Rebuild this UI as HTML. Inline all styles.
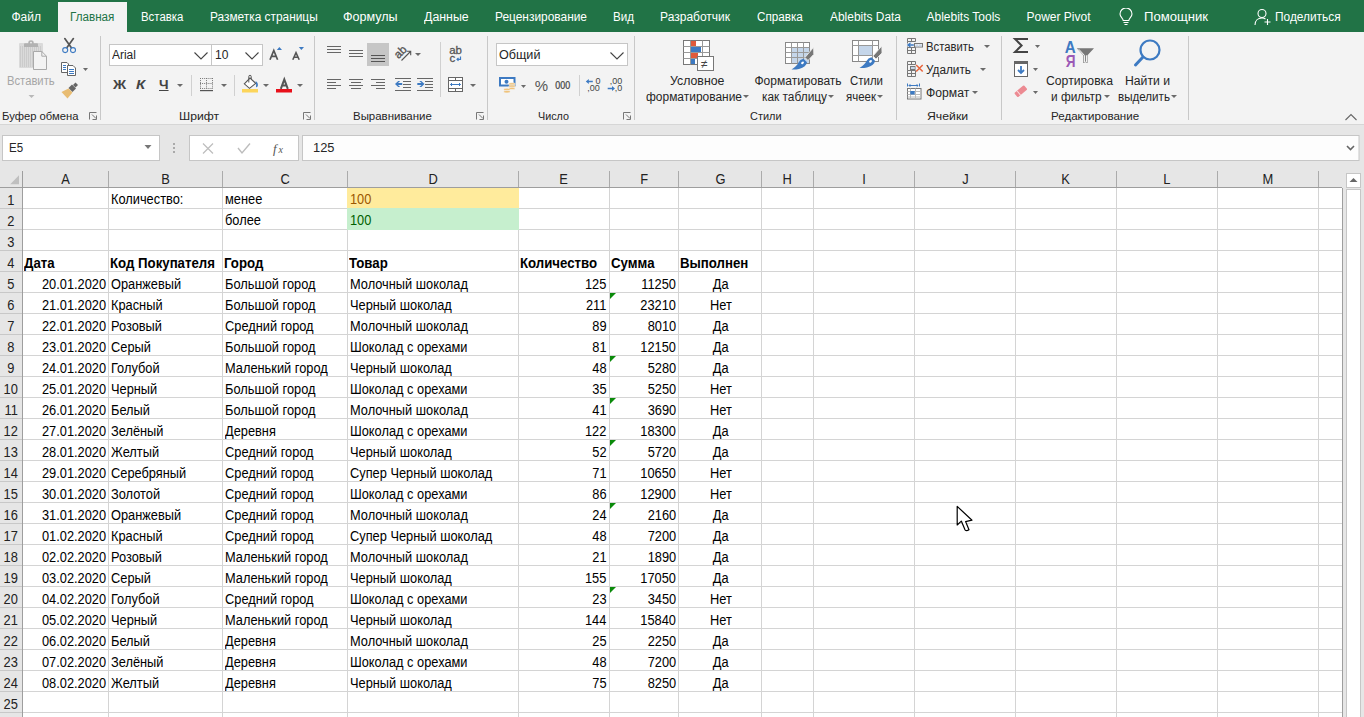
<!DOCTYPE html>
<html><head><meta charset="utf-8">
<style>
*{margin:0;padding:0;box-sizing:border-box}
html,body{width:1364px;height:717px;overflow:hidden;background:#fff}
body{position:relative;font-family:"Liberation Sans",sans-serif;color:#262626}
.a{position:absolute}
.t{position:absolute;line-height:1;white-space:nowrap}
#tabs{position:absolute;left:0;top:0;width:1364px;height:32px;background:#217346}
.tab{position:absolute;top:11px;font-size:12px;line-height:1;color:#fff;white-space:nowrap}
#ribbon{position:absolute;left:0;top:32px;width:1364px;height:92px;background:#f3f3f3;border-bottom:1px solid #d4d4d4}
.sep{position:absolute;top:36px;width:1px;height:84px;background:#c8c8c8}
.gl{position:absolute;top:110px;font-size:11.5px;line-height:1;color:#444;white-space:nowrap}
.rt{position:absolute;font-size:11.5px;line-height:1;color:#262626;white-space:nowrap}
.dd{position:absolute;width:0;height:0;border-left:3px solid transparent;border-right:3px solid transparent;border-top:3px solid #666}
.launch{position:absolute;top:112px;width:8px;height:8px}
#fbar{position:absolute;left:0;top:125px;width:1364px;height:46px;background:#e6e6e6}
.box{position:absolute;background:#fff;border:1px solid #c6c6c6}
#colhdr{position:absolute;left:0;top:171px;width:1342px;height:17px;background:#e6e6e6;border-bottom:1px solid #9e9e9e}
.ch{position:absolute;top:171px;height:16px;font-size:13px;line-height:1;text-align:center;color:#222}
.chs{position:absolute;top:171px;width:1px;height:16px;background:#b4b4b4}
.rh{position:absolute;left:0;width:22px;height:21px;background:#e6e6e6;font-size:13px;text-align:center;color:#222}
.vl{position:absolute;top:188px;width:1px;height:529px;background:#d4d4d4}
.hl{position:absolute;left:22px;width:1320px;height:1px;background:#d4d4d4}
.c{position:absolute;font-size:13px;line-height:24px;height:20px;white-space:nowrap;color:#000;letter-spacing:-0.25px;overflow:visible}
.r{text-align:right}
.m{text-align:center}
.b{font-weight:bold;letter-spacing:-0.2px}
.tri{position:absolute;width:0;height:0;border-top:6px solid #008000;border-right:6px solid transparent}
</style></head><body>
<div id="tabs">
<div class="a" style="left:58px;top:2px;width:69px;height:30px;background:#f3f3f3"></div>
<svg class="a" style="left:1117px;top:8px" width="18" height="18" viewBox="0 0 18 18" fill="none" stroke="#fff" stroke-width="1.1">
<path d="M6.2,12.5 C6.2,10.5 3,9 3,6 A6,6 0 0 1 15,6 C15,9 11.8,10.5 11.8,12.5 Z"/>
<path d="M6.5,14.5 H11.5 M7.5,16.5 H10.5"/>
</svg>
<svg class="a" style="left:1254px;top:8px" width="18" height="18" viewBox="0 0 18 18" fill="none" stroke="#fff" stroke-width="1.1">
<circle cx="8" cy="5.5" r="4"/>
<path d="M1,17 C1,12.5 4,10 8,10 C9.5,10 10.5,10.3 11.5,11"/>
<path d="M13.5,11 V17 M10.5,14 H16.5"/>
</svg>
</div>
<div class="a" style="left:0;top:32px;width:1364px;height:92px;background:#f3f3f3"></div>
<div class="a" style="left:0;top:124px;width:1364px;height:1px;background:#d6d6d6"></div>
<div class="a" style="left:0;top:125px;width:1364px;height:46px;background:#e6e6e6"></div>
<svg class="a" style="left:0;top:0" width="1364" height="171" viewBox="0 0 1364 171">
<!-- group separators -->
<g fill="#c8c8c8">
<rect x="100" y="36" width="1" height="84"/>
<rect x="314" y="36" width="1" height="84"/>
<rect x="487" y="36" width="1" height="84"/>
<rect x="634" y="36" width="1" height="84"/>
<rect x="896" y="36" width="1" height="84"/>
<rect x="1001" y="36" width="1" height="84"/>
<rect x="1188" y="36" width="1" height="84"/>
<!-- inner separators -->
<rect x="191" y="75" width="1" height="21" fill="#d0d0d0"/>
<rect x="234" y="75" width="1" height="21" fill="#d0d0d0"/>
<rect x="440" y="42" width="1" height="55" fill="#d0d0d0"/>
<rect x="579" y="75" width="1" height="21" fill="#d0d0d0"/>
</g>
<!-- dialog launchers -->
<g fill="none" stroke="#777" stroke-width="1">
<path d="M89.5,119.5 V112.5 H96.5 M92,114.5 L96,118.5 M96.5,115.5 V119.5 H92.5"/>
<path d="M303.5,119.5 V112.5 H310.5 M306,114.5 L310,118.5 M310.5,115.5 V119.5 H306.5"/>
<path d="M476.5,119.5 V112.5 H483.5 M479,114.5 L483,118.5 M483.5,115.5 V119.5 H479.5"/>
<path d="M623.5,119.5 V112.5 H630.5 M626,114.5 L630,118.5 M630.5,115.5 V119.5 H626.5"/>
</g>
<!-- dropdown arrows -->
<g fill="#6a6a6a">
<path d="M83,68 h5 l-2.5,3 z"/>
<path d="M177,84 h6 l-3,3 z"/>
<path d="M221,84 h6 l-3,3 z"/>
<path d="M263,84 h6 l-3,3 z"/>
<path d="M297,84 h6 l-3,3 z"/>
<path d="M415,53 h6 l-3,3 z"/>
<path d="M470,84 h6 l-3,3 z"/>
<path d="M521,85 h5 l-2.5,3 z"/>
<path d="M743,95 h6 l-3,3 z"/>
<path d="M828,95 h6 l-3,3 z"/>
<path d="M877,95 h6 l-3,3 z"/>
<path d="M984,45 h6 l-3,3 z"/>
<path d="M980,68 h6 l-3,3 z"/>
<path d="M972,91 h6 l-3,3 z"/>
<path d="M1035,45 h5 l-2.5,3 z"/>
<path d="M1033,68 h5 l-2.5,3 z"/>
<path d="M1033,91 h5 l-2.5,3 z"/>
<path d="M1104,95 h6 l-3,3 z"/>
<path d="M1171,95 h6 l-3,3 z"/>
</g>
<path d="M28.5,95 h6 l-3,3 z" fill="#b8b8b8"/>

<!-- ===== Clipboard ===== -->
<rect x="19" y="43" width="24" height="25" rx="1" fill="#dadada"/>
<g fill="#cbcbcb"><rect x="20" y="46" width="1" height="21"/><rect x="22" y="46" width="1" height="21"/><rect x="24" y="46" width="1" height="21"/><rect x="26" y="46" width="1" height="21"/><rect x="28" y="46" width="1" height="21"/><rect x="30" y="46" width="1" height="21"/><rect x="32" y="46" width="1" height="21"/><rect x="34" y="46" width="1" height="21"/><rect x="36" y="46" width="1" height="21"/><rect x="38" y="46" width="1" height="21"/><rect x="40" y="46" width="1" height="21"/></g>
<path d="M24,47 V44 Q24,43.3 25,43.3 H28.3 V42 Q28.3,40.3 31,40.3 Q33.7,40.3 33.7,42 V43.3 H37 Q38,43.3 38,44 V47 Z" fill="#b2b2b2"/>
<circle cx="31" cy="42.6" r="0.9" fill="#f3f3f3"/>
<path d="M33.5,51.5 H41.8 L46.5,56.2 V69.5 H33.5 Z" fill="#f3f3f3" stroke="#a9a9a9"/>
<path d="M41.8,51.5 V56.2 H46.5" fill="none" stroke="#a9a9a9"/>
<!-- scissors -->
<path d="M64.8,38.6 L71.2,47.6 M73.4,38.6 L67,47.6" stroke="#555" stroke-width="1.7" stroke-linecap="round" fill="none"/>
<g stroke="#3d7ac2" stroke-width="1.1" fill="none"><circle cx="65.2" cy="50.1" r="2.5"/><circle cx="73" cy="50.1" r="2.5"/></g>
<!-- copy -->
<path d="M61.5,62.5 H67 L68.5,64 V72.5 H61.5 Z" fill="#fff" stroke="#666"/>
<path d="M67.5,65.5 H73 L75.5,68 V75.5 H67.5 Z" fill="#fff" stroke="#666"/>
<g fill="#3d7ac2"><rect x="63" y="65" width="3" height="1"/><rect x="63" y="67" width="3" height="1"/><rect x="63" y="69" width="3" height="1"/><rect x="69" y="69" width="5" height="1"/><rect x="69" y="71" width="5" height="1"/><rect x="69" y="73" width="5" height="1"/></g>
<!-- format painter -->
<path d="M61.5,92 L68.5,88.5 L72.5,92.5 L67.5,98.5 Z" fill="#e8bc72"/>
<path d="M68.5,88 L72,84.5 L76,88.5 L72.5,92 Z" fill="#666"/>
<path d="M73,85 L75.5,82.5 L78,85 L75.5,87.5 Z" fill="#666"/>

<!-- ===== Font ===== -->
<rect x="109.5" y="44.5" width="102" height="21" fill="#fff" stroke="#c6c6c6"/>
<rect x="211.5" y="44.5" width="51" height="21" fill="#fff" stroke="#c6c6c6"/>
<path d="M194.5,52.5 L201,59 L207.5,52.5" fill="none" stroke="#444" stroke-width="1.1"/>
<path d="M245.5,52.5 L252,59 L258.5,52.5" fill="none" stroke="#444" stroke-width="1.1"/>
<!-- grow/shrink -->
<path d="M270,59.8 L273.8,50.4 L277.6,59.8 M271.5,56.3 h4.6" fill="none" stroke="#555" stroke-width="1.7"/>
<path d="M276.8,50 l2.6,-3 l2.6,3 z" fill="#3d7ac2"/>
<path d="M292.8,59.8 L296,52.6 L299.2,59.8 M294,57.3 h4" fill="none" stroke="#555" stroke-width="1.6"/>
<path d="M298.8,47 l2.6,3 l2.6,-3 z" fill="#3d7ac2"/>
<!-- borders -->
<g fill="#9a9a9a">
<path d="M200,77 h13 v1 h-13 z M200,77 v13 h1 v-13 z M212,77 v13 h1 v-13z" fill="none"/>
</g>
<g stroke="#777" stroke-width="1" stroke-dasharray="1,1.1" fill="none">
<path d="M200.5,78 V89 M206.5,78 V89 M212.5,78 V89 M200,78.5 H213 M200,83.5 H213 M200,88.5 H213"/>
</g>
<rect x="200" y="90" width="13" height="1.2" fill="#555"/>
<!-- fill color -->
<path d="M244.3,83.8 L250,78 L255.7,83.3 L249.5,88.4 Z" fill="#fff" stroke="#555" stroke-width="1.1"/>
<path d="M248.8,82.5 V76.5 q0,-1.2 1.2,-1.2 q1.2,0 1.2,1.2 V79" fill="none" stroke="#555" stroke-width="1"/>
<path d="M255.6,81 q2.8,1.5 2.2,5 q-0.6,1.2 -1.8,1.2 q0.6,-2.5 -0.4,-6.2z" fill="#3d7ac2"/>
<rect x="242" y="89" width="16" height="3.5" fill="#fcd55b"/>
<!-- font color -->
<path d="M280.8,88.8 L284.3,79.3 L287.8,88.8 M282,85.5 h4.6" fill="none" stroke="#555" stroke-width="2"/>
<rect x="276" y="89" width="16" height="3.5" fill="#e8101a"/>

<!-- ===== Alignment ===== -->
<g fill="#666">
<rect x="327" y="46" width="14" height="1"/><rect x="327" y="49" width="14" height="1"/><rect x="327" y="52" width="14" height="1"/>
<rect x="349" y="50" width="14" height="1"/><rect x="349" y="53" width="14" height="1"/><rect x="349" y="56" width="14" height="1"/>
</g>
<rect x="367" y="43" width="22" height="23" fill="#c6c6c6"/>
<g fill="#555"><rect x="371" y="55" width="14" height="1"/><rect x="371" y="58" width="14" height="1"/><rect x="371" y="61" width="14" height="1"/></g>
<!-- orientation -->
<g stroke="#555" stroke-width="1.1" fill="none">
<path d="M401.5,60.5 L410.5,51.5 M406.8,51.3 H410.7 V55.2"/>
</g>
<text x="400.3" y="55.8" font-size="11.5" fill="#555" stroke="#555" stroke-width="0.35" text-anchor="middle" font-family="Liberation Sans" transform="rotate(-45 400.3 51.8)">ab</text>
<!-- left/center/right -->
<g fill="#666">
<rect x="327" y="79" width="14" height="1"/><rect x="327" y="82" width="9" height="1"/><rect x="327" y="85" width="14" height="1"/><rect x="327" y="88" width="9" height="1"/>
<rect x="349" y="79" width="14" height="1"/><rect x="351" y="82" width="10" height="1"/><rect x="349" y="85" width="14" height="1"/><rect x="351" y="88" width="10" height="1"/>
<rect x="371" y="79" width="14" height="1"/><rect x="376" y="82" width="9" height="1"/><rect x="371" y="85" width="14" height="1"/><rect x="376" y="88" width="9" height="1"/>
<!-- indents -->
<rect x="395" y="78" width="16" height="1"/><rect x="403" y="81" width="8" height="1"/><rect x="403" y="84" width="8" height="1"/><rect x="403" y="87" width="8" height="1"/><rect x="395" y="90" width="16" height="1"/>
<rect x="417" y="78" width="16" height="1"/><rect x="425" y="81" width="8" height="1"/><rect x="425" y="84" width="8" height="1"/><rect x="425" y="87" width="8" height="1"/><rect x="417" y="90" width="16" height="1"/>
</g>
<path d="M395,84 l3.2,-3 h2 l-2.2,2 h4.2 v2 h-4.2 l2.2,2 h-2 z" fill="#3d7ac2"/>
<path d="M424.5,84 l-3.2,-3 h-2 l2.2,2 h-4.2 v2 h4.2 l-2.2,2 h2 z" fill="#3d7ac2"/>
<!-- wrap -->
<text x="449.2" y="53.8" font-size="11.5" fill="#555" stroke="#555" stroke-width="0.3" font-family="Liberation Sans">ab</text>
<text x="449.6" y="61.6" font-size="11.5" fill="#555" stroke="#555" stroke-width="0.3" font-family="Liberation Sans">c</text>
<path d="M460.5,56.4 v2.9 h-3.3 M458.5,57.8 l-1.5,1.5 l1.5,1.5" fill="none" stroke="#3d7ac2" stroke-width="1.2"/>
<!-- merge -->
<rect x="448.5" y="77.5" width="14" height="14" fill="#fff" stroke="#666"/>
<path d="M448.5,80.5 h14 M448.5,88.5 h14 M455.5,77.5 v3 M455.5,88.5 v3" stroke="#666" fill="none"/>
<path d="M450.5,84.5 h10 M452,83 l-1.5,1.5 l1.5,1.5 M459,83 l1.5,1.5 l-1.5,1.5" stroke="#3d7ac2" fill="none"/>

<!-- ===== Number ===== -->
<rect x="496.5" y="43.5" width="131" height="22" fill="#fff" stroke="#c6c6c6"/>
<path d="M610.5,52.5 L617,59 L623.5,52.5" fill="none" stroke="#444" stroke-width="1.1"/>
<!-- currency -->
<rect x="500" y="78" width="14.5" height="7.5" fill="#fff" stroke="#3d7ac2" stroke-width="2"/>
<circle cx="506.5" cy="81.8" r="2" fill="#3d7ac2"/>
<g fill="#efc27a" stroke="#f3f3f3" stroke-width="0.6"><ellipse cx="512" cy="84" rx="3.3" ry="1.3"/><ellipse cx="512" cy="86.2" rx="3.3" ry="1.3"/><ellipse cx="507" cy="89.5" rx="3.3" ry="1.3"/><ellipse cx="507" cy="91.7" rx="3.3" ry="1.3"/><ellipse cx="512" cy="88.4" rx="3" ry="1.2"/></g>
<!-- percent / thousands -->
<text x="534.8" y="91" font-size="15" fill="#555" font-family="Liberation Sans">%</text>
<text x="555.3" y="88.6" font-size="10.5" fill="#444" stroke="#444" stroke-width="0.25" font-family="Liberation Sans" transform="translate(555.3 0) scale(0.85 1) translate(-555.3 0)">000</text>
<!-- decimals -->
<text x="595.5" y="83.6" font-size="9" fill="#444" font-family="Liberation Sans">0</text>
<text x="587.3" y="91.4" font-size="9" fill="#444" font-family="Liberation Sans">,00</text>
<path d="M585.8,81.5 l3,-2.5 v1.7 h4 v1.6 h-4 v1.7 z" fill="#3d7ac2"/>
<text x="609.8" y="83.6" font-size="9" fill="#444" font-family="Liberation Sans">,00</text>
<text x="614.8" y="91.4" font-size="9" fill="#444" font-family="Liberation Sans">,0</text>
<path d="M615,88.5 l-3,-2.5 v1.7 h-4.3 v1.6 h4.3 v1.7 z" fill="#3d7ac2"/>
</svg>
<svg class="a" style="left:0;top:0" width="1364" height="171" viewBox="0 0 1364 171">
<!-- ===== Styles ===== -->
<!-- conditional formatting -->
<rect x="683.5" y="40.5" width="26" height="24" fill="#fff" stroke="#777"/>
<path d="M683.5,46.5 h26 M683.5,52.5 h26 M683.5,58.5 h26 M690.5,40.5 v24 M702.5,40.5 v24" stroke="#999" fill="none"/>
<rect x="691" y="41" width="5" height="5" fill="#e05a3a"/>
<rect x="691" y="47" width="10" height="5" fill="#3d7ac2"/>
<rect x="691" y="53" width="7" height="5" fill="#e05a3a"/>
<rect x="691" y="59" width="4" height="5" fill="#3d7ac2"/>
<rect x="697.5" y="56.5" width="16" height="14" fill="#fff" stroke="#777"/>
<text x="701" y="68" font-size="12" fill="#444" font-family="Liberation Sans">≠</text>
<!-- format as table -->
<rect x="785.5" y="42.5" width="24" height="21" fill="#fff" stroke="#888"/>
<rect x="791" y="48" width="18" height="15" fill="#c5d6ea"/>
<path d="M785.5,47.5 h24 M785.5,52.5 h24 M785.5,57.5 h24 M791.5,42.5 v21 M797.5,42.5 v21 M803.5,42.5 v21" stroke="#999" fill="none"/>
<path d="M813.6,47.3 L813.8,54.3 L808,60.5 L805,57.5 Z" fill="#777" stroke="#f3f3f3" stroke-width="0.8"/>
<path d="M803.5,58.8 L807,62.3 Q806.5,67 799,69 Q795,69.8 791.5,69.5 Q797,66 798.5,62.5 Q800,59.5 803.5,58.8 Z" fill="#3d7ac2"/>
<ellipse cx="802.5" cy="62.8" rx="1.6" ry="1.1" fill="#fff" transform="rotate(-40 802.5 62.8)"/>
<!-- cell styles -->
<rect x="852.5" y="40.5" width="26" height="21" fill="#fff" stroke="#888"/>
<rect x="859" y="45.5" width="14" height="10" fill="#c5d6ea"/>
<path d="M852.5,45.5 h26 M852.5,55.5 h26 M858.5,40.5 v21 M872.5,40.5 v21" stroke="#999" fill="none"/>
<path d="M881.8,46 L882,53 L876,59 L873,56 Z" fill="#777" stroke="#f3f3f3" stroke-width="0.8"/>
<path d="M871.5,57.3 L875,60.8 Q874.5,65.5 867,67.5 Q863,68.3 859.5,68 Q865,64.5 866.5,61 Q868,58 871.5,57.3 Z" fill="#3d7ac2"/>
<ellipse cx="870.5" cy="61.3" rx="1.6" ry="1.1" fill="#fff" transform="rotate(-40 870.5 61.3)"/>

<!-- ===== Cells ===== -->
<!-- insert -->
<g fill="none" stroke="#777">
<path d="M907.5,38.5 h8 v3 h-8 z M911.5,38.5 v3"/>
<path d="M907.5,47.5 h8 v6 h-8 z M907.5,50.5 h8 M911.5,47.5 v6"/>
<path d="M907.5,41.5 v2 M907.5,46.5 v1"/>
<rect x="914.5" y="43.5" width="8" height="3.5"/>
</g>
<rect x="915.5" y="44.5" width="2.8" height="2" fill="#c5d6ea"/><rect x="919" y="44.5" width="2.8" height="2" fill="#c5d6ea"/>
<path d="M906.8,45 l3,-2.3 h1.6 l-1.6,1.5 h4 v1.6 h-4 l1.6,1.5 h-1.6 z" fill="#3d7ac2"/>
<!-- delete -->
<g fill="none" stroke="#777">
<path d="M907.5,61.5 h8 v3 h-8 z M911.5,61.5 v3"/>
<path d="M907.5,70.5 h8 v6 h-8 z M907.5,73.5 h8 M911.5,70.5 v6"/>
<path d="M907.5,64.5 v6"/>
<rect x="910.5" y="66.5" width="4.5" height="3"/>
</g>
<rect x="911" y="67" width="3.5" height="2" fill="#c5d6ea"/>
<path d="M916.2,65 l6.5,6.5 M922.7,65 l-6.5,6.5" stroke="#e8643c" stroke-width="1.5"/>
<!-- format -->
<path d="M907.5,83.5 v3 M919.5,83.5 v3" stroke="#3d7ac2" fill="none"/>
<path d="M909,85.5 h9 M910.3,84.2 l-1.3,1.3 l1.3,1.3 M916.7,84.2 l1.3,1.3 l-1.3,1.3" stroke="#3d7ac2" fill="none"/>
<rect x="907.5" y="88.5" width="13.5" height="10.5" fill="#fff" stroke="#777"/>
<path d="M907.5,91.5 h13.5 M907.5,94.5 h13.5 M907.5,97 h13.5 M910.5,88.5 v10.5 M915.5,88.5 v10.5" stroke="#bbb" fill="none"/>
<rect x="910.3" y="91" width="4.4" height="3.5" fill="#3d7ac2"/>

<!-- ===== Editing ===== -->
<path d="M1028,39 H1015 L1021.6,45.5 L1015,52 H1028" fill="none" stroke="#444" stroke-width="2" stroke-linejoin="miter"/>
<rect x="1014.5" y="61.5" width="13" height="15" fill="#fff" stroke="#666"/>
<rect x="1014" y="61" width="14" height="3" fill="#666"/>
<path d="M1021,66 v7 M1018,70 l3,3 l3,-3" stroke="#3d7ac2" stroke-width="1.8" fill="none"/>
<g transform="rotate(-40 1020.7 91.2)"><rect x="1014.5" y="88.5" width="12.5" height="5.6" rx="1" fill="#ec8a92"/><rect x="1017.6" y="88.5" width="0.9" height="5.6" fill="#fbe0e3"/></g>
<!-- sort -->
<text x="1064.8" y="52.6" font-size="16" font-weight="bold" fill="#3d7ac2" font-family="Liberation Sans" transform="translate(1064.8 0) scale(0.95 1) translate(-1064.8 0)">A</text>
<text x="1065.8" y="66.7" font-size="16" font-weight="bold" fill="#9b59b6" font-family="Liberation Sans" transform="translate(1065.8 0) scale(0.85 1) translate(-1065.8 0)">Я</text>
<path d="M1076.8,48.3 h17.2 l-6.5,7 v7.7 h-4.2 v-7.7 z" fill="#777"/>
<path d="M1078.8,49.3 l5.6,6 v6.9 h2 v-6.9" fill="none" stroke="#fff" stroke-width="1"/>
<!-- find -->
<circle cx="1150" cy="50" r="9.5" fill="none" stroke="#3d7ac2" stroke-width="2.2"/>
<path d="M1143,57 L1135.5,65" stroke="#3d7ac2" stroke-width="3" stroke-linecap="round"/>
<!-- collapse -->
<path d="M1345.5,120 L1351,114.5 L1356.5,120" fill="none" stroke="#666" stroke-width="1.1"/>

<!-- ===== Formula bar ===== -->
<rect x="2.5" y="135.5" width="157" height="25" fill="#fff" stroke="#c6c6c6"/>
<path d="M144.5,145 h7 l-3.5,4 z" fill="#777"/>
<g fill="#aaa"><rect x="173" y="143" width="2" height="2"/><rect x="173" y="147" width="2" height="2"/><rect x="173" y="151" width="2" height="2"/></g>
<rect x="189.5" y="135.5" width="109" height="25" fill="#fff" stroke="#c6c6c6"/>
<path d="M203,143.5 l10,10 M213,143.5 l-10,10" stroke="#bdbdbd" stroke-width="1.2"/>
<path d="M238,148 l4,5 l8,-9.5" stroke="#bdbdbd" stroke-width="1.4" fill="none"/>
<text x="273" y="153" font-size="13" font-style="italic" fill="#555" font-family="Liberation Serif">f</text>
<text x="278.5" y="153" font-size="10" font-style="italic" fill="#555" font-family="Liberation Serif">x</text>
<rect x="302.5" y="135.5" width="1056.5" height="25" fill="#fdfdfd" stroke="#c6c6c6"/>
<path d="M1347,146 l3.5,3.5 l3.5,-3.5" fill="none" stroke="#666" stroke-width="1.6"/>
</svg>
<div class="a" style="left:0;top:171px;width:1342px;height:17px;background:#e6e6e6"></div>
<div class="a" style="left:0;top:187px;width:22px;height:530px;background:#e6e6e6"></div>
<div class="a" style="left:0;top:208px;width:22px;height:1px;background:#c8c8c8"></div>
<div class="a" style="left:23px;top:208px;width:325px;height:1px;background:#d4d4d4"></div>
<div class="a" style="left:518px;top:208px;width:824px;height:1px;background:#d4d4d4"></div>
<div class="a" style="left:0;top:229px;width:22px;height:1px;background:#c8c8c8"></div>
<div class="a" style="left:23px;top:229px;width:325px;height:1px;background:#d4d4d4"></div>
<div class="a" style="left:518px;top:229px;width:824px;height:1px;background:#d4d4d4"></div>
<div class="a" style="left:0;top:250px;width:22px;height:1px;background:#c8c8c8"></div>
<div class="a" style="left:23px;top:250px;width:1319px;height:1px;background:#d4d4d4"></div>
<div class="a" style="left:0;top:271px;width:22px;height:1px;background:#c8c8c8"></div>
<div class="a" style="left:23px;top:271px;width:1319px;height:1px;background:#d4d4d4"></div>
<div class="a" style="left:0;top:292px;width:22px;height:1px;background:#c8c8c8"></div>
<div class="a" style="left:23px;top:292px;width:1319px;height:1px;background:#d4d4d4"></div>
<div class="a" style="left:0;top:313px;width:22px;height:1px;background:#c8c8c8"></div>
<div class="a" style="left:23px;top:313px;width:1319px;height:1px;background:#d4d4d4"></div>
<div class="a" style="left:0;top:334px;width:22px;height:1px;background:#c8c8c8"></div>
<div class="a" style="left:23px;top:334px;width:1319px;height:1px;background:#d4d4d4"></div>
<div class="a" style="left:0;top:355px;width:22px;height:1px;background:#c8c8c8"></div>
<div class="a" style="left:23px;top:355px;width:1319px;height:1px;background:#d4d4d4"></div>
<div class="a" style="left:0;top:376px;width:22px;height:1px;background:#c8c8c8"></div>
<div class="a" style="left:23px;top:376px;width:1319px;height:1px;background:#d4d4d4"></div>
<div class="a" style="left:0;top:397px;width:22px;height:1px;background:#c8c8c8"></div>
<div class="a" style="left:23px;top:397px;width:1319px;height:1px;background:#d4d4d4"></div>
<div class="a" style="left:0;top:418px;width:22px;height:1px;background:#c8c8c8"></div>
<div class="a" style="left:23px;top:418px;width:1319px;height:1px;background:#d4d4d4"></div>
<div class="a" style="left:0;top:439px;width:22px;height:1px;background:#c8c8c8"></div>
<div class="a" style="left:23px;top:439px;width:1319px;height:1px;background:#d4d4d4"></div>
<div class="a" style="left:0;top:460px;width:22px;height:1px;background:#c8c8c8"></div>
<div class="a" style="left:23px;top:460px;width:1319px;height:1px;background:#d4d4d4"></div>
<div class="a" style="left:0;top:481px;width:22px;height:1px;background:#c8c8c8"></div>
<div class="a" style="left:23px;top:481px;width:1319px;height:1px;background:#d4d4d4"></div>
<div class="a" style="left:0;top:502px;width:22px;height:1px;background:#c8c8c8"></div>
<div class="a" style="left:23px;top:502px;width:1319px;height:1px;background:#d4d4d4"></div>
<div class="a" style="left:0;top:523px;width:22px;height:1px;background:#c8c8c8"></div>
<div class="a" style="left:23px;top:523px;width:1319px;height:1px;background:#d4d4d4"></div>
<div class="a" style="left:0;top:544px;width:22px;height:1px;background:#c8c8c8"></div>
<div class="a" style="left:23px;top:544px;width:1319px;height:1px;background:#d4d4d4"></div>
<div class="a" style="left:0;top:565px;width:22px;height:1px;background:#c8c8c8"></div>
<div class="a" style="left:23px;top:565px;width:1319px;height:1px;background:#d4d4d4"></div>
<div class="a" style="left:0;top:586px;width:22px;height:1px;background:#c8c8c8"></div>
<div class="a" style="left:23px;top:586px;width:1319px;height:1px;background:#d4d4d4"></div>
<div class="a" style="left:0;top:607px;width:22px;height:1px;background:#c8c8c8"></div>
<div class="a" style="left:23px;top:607px;width:1319px;height:1px;background:#d4d4d4"></div>
<div class="a" style="left:0;top:628px;width:22px;height:1px;background:#c8c8c8"></div>
<div class="a" style="left:23px;top:628px;width:1319px;height:1px;background:#d4d4d4"></div>
<div class="a" style="left:0;top:649px;width:22px;height:1px;background:#c8c8c8"></div>
<div class="a" style="left:23px;top:649px;width:1319px;height:1px;background:#d4d4d4"></div>
<div class="a" style="left:0;top:670px;width:22px;height:1px;background:#c8c8c8"></div>
<div class="a" style="left:23px;top:670px;width:1319px;height:1px;background:#d4d4d4"></div>
<div class="a" style="left:0;top:691px;width:22px;height:1px;background:#c8c8c8"></div>
<div class="a" style="left:23px;top:691px;width:1319px;height:1px;background:#d4d4d4"></div>
<div class="a" style="left:0;top:712px;width:22px;height:1px;background:#c8c8c8"></div>
<div class="a" style="left:23px;top:712px;width:1319px;height:1px;background:#d4d4d4"></div>
<div class="a" style="left:108px;top:171px;width:1px;height:16px;background:#ababab"></div>
<div class="a" style="left:108px;top:188px;width:1px;height:529px;background:#d4d4d4"></div>
<div class="a" style="left:222px;top:171px;width:1px;height:16px;background:#ababab"></div>
<div class="a" style="left:222px;top:188px;width:1px;height:529px;background:#d4d4d4"></div>
<div class="a" style="left:347px;top:171px;width:1px;height:16px;background:#ababab"></div>
<div class="a" style="left:347px;top:230px;width:1px;height:487px;background:#d4d4d4"></div>
<div class="a" style="left:347px;top:188px;width:1px;height:42px;background:#d4d4d4"></div>
<div class="a" style="left:518px;top:171px;width:1px;height:16px;background:#ababab"></div>
<div class="a" style="left:518px;top:230px;width:1px;height:487px;background:#d4d4d4"></div>
<div class="a" style="left:518px;top:188px;width:1px;height:42px;background:#d4d4d4"></div>
<div class="a" style="left:609px;top:171px;width:1px;height:16px;background:#ababab"></div>
<div class="a" style="left:609px;top:188px;width:1px;height:529px;background:#d4d4d4"></div>
<div class="a" style="left:678px;top:171px;width:1px;height:16px;background:#ababab"></div>
<div class="a" style="left:678px;top:188px;width:1px;height:529px;background:#d4d4d4"></div>
<div class="a" style="left:761px;top:171px;width:1px;height:16px;background:#ababab"></div>
<div class="a" style="left:761px;top:188px;width:1px;height:529px;background:#d4d4d4"></div>
<div class="a" style="left:813px;top:171px;width:1px;height:16px;background:#ababab"></div>
<div class="a" style="left:813px;top:188px;width:1px;height:529px;background:#d4d4d4"></div>
<div class="a" style="left:914px;top:171px;width:1px;height:16px;background:#ababab"></div>
<div class="a" style="left:914px;top:188px;width:1px;height:529px;background:#d4d4d4"></div>
<div class="a" style="left:1015px;top:171px;width:1px;height:16px;background:#ababab"></div>
<div class="a" style="left:1015px;top:188px;width:1px;height:529px;background:#d4d4d4"></div>
<div class="a" style="left:1116px;top:171px;width:1px;height:16px;background:#ababab"></div>
<div class="a" style="left:1116px;top:188px;width:1px;height:529px;background:#d4d4d4"></div>
<div class="a" style="left:1217px;top:171px;width:1px;height:16px;background:#ababab"></div>
<div class="a" style="left:1217px;top:188px;width:1px;height:529px;background:#d4d4d4"></div>
<div class="a" style="left:1318px;top:171px;width:1px;height:16px;background:#ababab"></div>
<div class="a" style="left:1318px;top:188px;width:1px;height:529px;background:#d4d4d4"></div>
<div class="a" style="left:347px;top:188px;width:172px;height:20px;background:#ffeb9c"></div>
<div class="a" style="left:347px;top:208px;width:172px;height:22px;background:#c6efce"></div>
<div class="a" style="left:0;top:187px;width:1342px;height:1px;background:#9e9e9e"></div>
<div class="a" style="left:22px;top:171px;width:1px;height:546px;background:#9e9e9e"></div>
<svg class="a" style="left:10px;top:175px" width="10" height="10"><path d="M0.2,9.2 L9,9.2 L9,0.3 Z" fill="#bfbfbf"/></svg>
<svg class="a" style="left:610px;top:293px" width="7" height="7"><path d="M0,0 H6 L0,6 Z" fill="#0a8a0a"/></svg>
<svg class="a" style="left:610px;top:356px" width="7" height="7"><path d="M0,0 H6 L0,6 Z" fill="#0a8a0a"/></svg>
<svg class="a" style="left:610px;top:398px" width="7" height="7"><path d="M0,0 H6 L0,6 Z" fill="#0a8a0a"/></svg>
<svg class="a" style="left:610px;top:440px" width="7" height="7"><path d="M0,0 H6 L0,6 Z" fill="#0a8a0a"/></svg>
<svg class="a" style="left:610px;top:503px" width="7" height="7"><path d="M0,0 H6 L0,6 Z" fill="#0a8a0a"/></svg>
<svg class="a" style="left:610px;top:587px" width="7" height="7"><path d="M0,0 H6 L0,6 Z" fill="#0a8a0a"/></svg>
<div class="a" style="left:1342px;top:171px;width:22px;height:546px;background:#e6e6e6"></div>
<div class="a" style="left:1342px;top:188px;width:1px;height:529px;background:#9e9e9e"></div>
<div class="a" style="left:1346px;top:173px;width:15px;height:15px;background:#fff;border:1px solid #c6c6c6"></div>
<svg class="a" style="left:1349px;top:177px" width="9" height="6"><path d="M0.5,5 L4.5,1 L8.5,5 Z" fill="#666"/></svg>
<div class="a" style="left:1346px;top:189px;width:15px;height:540px;background:#fff;border:1px solid #c6c6c6"></div><div class="t" style="left:11.50px;top:10.84px;font-size:12px;color:#fff;font-weight:normal;">Файл</div>
<div class="t" style="left:140.93px;top:10.84px;font-size:12px;color:#fff;font-weight:normal;transform:scaleX(0.9493);transform-origin:left 0;">Вставка</div>
<div class="t" style="left:209.51px;top:10.84px;font-size:12px;color:#fff;font-weight:normal;transform:scaleX(0.9891);transform-origin:left 0;">Разметка страницы</div>
<div class="t" style="left:343.18px;top:10.84px;font-size:12px;color:#fff;font-weight:normal;transform:scaleX(1.0465);transform-origin:left 0;">Формулы</div>
<div class="t" style="left:424.18px;top:10.84px;font-size:12px;color:#fff;font-weight:normal;transform:scaleX(1.0316);transform-origin:left 0;">Данные</div>
<div class="t" style="left:494.80px;top:10.84px;font-size:12px;color:#fff;font-weight:normal;transform:scaleX(0.9927);transform-origin:left 0;">Рецензирование</div>
<div class="t" style="left:612.52px;top:10.84px;font-size:12px;color:#fff;font-weight:normal;transform:scaleX(0.9653);transform-origin:left 0;">Вид</div>
<div class="t" style="left:660.10px;top:10.84px;font-size:12px;color:#fff;font-weight:normal;">Разработчик</div>
<div class="t" style="left:756.91px;top:10.84px;font-size:12px;color:#fff;font-weight:normal;transform:scaleX(0.9744);transform-origin:left 0;">Справка</div>
<div class="t" style="left:829.50px;top:10.84px;font-size:12px;color:#fff;font-weight:normal;transform:scaleX(0.9947);transform-origin:left 0;">Ablebits Data</div>
<div class="t" style="left:926.50px;top:10.84px;font-size:12px;color:#fff;font-weight:normal;">Ablebits Tools</div>
<div class="t" style="left:1026.50px;top:10.84px;font-size:12px;color:#fff;font-weight:normal;">Power Pivot</div>
<div class="t" style="left:1144.45px;top:10.84px;font-size:12px;color:#fff;font-weight:normal;transform:scaleX(1.0921);transform-origin:left 0;">Помощник</div>
<div class="t" style="left:1274.51px;top:10.84px;font-size:12px;color:#fff;font-weight:normal;transform:scaleX(0.9898);transform-origin:left 0;">Поделиться</div>
<div class="t" style="left:70.11px;top:10.84px;font-size:12px;color:#217346;font-weight:normal;transform:scaleX(0.9712);transform-origin:left 0;">Главная</div>
<div class="t" style="left:60.83px;top:172.15px;font-size:14px;color:#222;font-weight:normal;transform:scaleX(0.9200);transform-origin:center 0;">A</div>
<div class="t" style="left:160.83px;top:172.15px;font-size:14px;color:#222;font-weight:normal;transform:scaleX(0.9200);transform-origin:center 0;">B</div>
<div class="t" style="left:279.94px;top:172.15px;font-size:14px;color:#222;font-weight:normal;transform:scaleX(0.9200);transform-origin:center 0;">C</div>
<div class="t" style="left:427.94px;top:172.15px;font-size:14px;color:#222;font-weight:normal;transform:scaleX(0.9200);transform-origin:center 0;">D</div>
<div class="t" style="left:559.33px;top:172.15px;font-size:14px;color:#222;font-weight:normal;transform:scaleX(0.9200);transform-origin:center 0;">E</div>
<div class="t" style="left:639.72px;top:172.15px;font-size:14px;color:#222;font-weight:normal;transform:scaleX(0.9200);transform-origin:center 0;">F</div>
<div class="t" style="left:714.55px;top:172.15px;font-size:14px;color:#222;font-weight:normal;transform:scaleX(0.9200);transform-origin:center 0;">G</div>
<div class="t" style="left:782.44px;top:172.15px;font-size:14px;color:#222;font-weight:normal;transform:scaleX(0.9200);transform-origin:center 0;">H</div>
<div class="t" style="left:862.05px;top:172.15px;font-size:14px;color:#222;font-weight:normal;transform:scaleX(0.9200);transform-origin:center 0;">I</div>
<div class="t" style="left:961.50px;top:172.15px;font-size:14px;color:#222;font-weight:normal;transform:scaleX(0.9200);transform-origin:center 0;">J</div>
<div class="t" style="left:1061.33px;top:172.15px;font-size:14px;color:#222;font-weight:normal;transform:scaleX(0.9200);transform-origin:center 0;">K</div>
<div class="t" style="left:1163.10px;top:172.15px;font-size:14px;color:#222;font-weight:normal;transform:scaleX(0.9200);transform-origin:center 0;">L</div>
<div class="t" style="left:1262.16px;top:172.15px;font-size:14px;color:#222;font-weight:normal;transform:scaleX(0.9200);transform-origin:center 0;">M</div>
<div class="t" style="left:7.10px;top:193.15px;font-size:14px;color:#222;font-weight:normal;transform:scaleX(0.9200);transform-origin:center 0;">1</div>
<div class="t" style="left:7.10px;top:214.15px;font-size:14px;color:#222;font-weight:normal;transform:scaleX(0.9200);transform-origin:center 0;">2</div>
<div class="t" style="left:7.10px;top:235.15px;font-size:14px;color:#222;font-weight:normal;transform:scaleX(0.9200);transform-origin:center 0;">3</div>
<div class="t" style="left:7.10px;top:256.15px;font-size:14px;color:#222;font-weight:normal;transform:scaleX(0.9200);transform-origin:center 0;">4</div>
<div class="t" style="left:7.10px;top:277.15px;font-size:14px;color:#222;font-weight:normal;transform:scaleX(0.9200);transform-origin:center 0;">5</div>
<div class="t" style="left:7.10px;top:298.15px;font-size:14px;color:#222;font-weight:normal;transform:scaleX(0.9200);transform-origin:center 0;">6</div>
<div class="t" style="left:7.10px;top:319.15px;font-size:14px;color:#222;font-weight:normal;transform:scaleX(0.9200);transform-origin:center 0;">7</div>
<div class="t" style="left:7.10px;top:340.15px;font-size:14px;color:#222;font-weight:normal;transform:scaleX(0.9200);transform-origin:center 0;">8</div>
<div class="t" style="left:7.10px;top:361.15px;font-size:14px;color:#222;font-weight:normal;transform:scaleX(0.9200);transform-origin:center 0;">9</div>
<div class="t" style="left:3.21px;top:382.15px;font-size:14px;color:#222;font-weight:normal;transform:scaleX(0.9200);transform-origin:center 0;">10</div>
<div class="t" style="left:3.73px;top:403.15px;font-size:14px;color:#222;font-weight:normal;transform:scaleX(0.9200);transform-origin:center 0;">11</div>
<div class="t" style="left:3.21px;top:424.15px;font-size:14px;color:#222;font-weight:normal;transform:scaleX(0.9200);transform-origin:center 0;">12</div>
<div class="t" style="left:3.21px;top:445.15px;font-size:14px;color:#222;font-weight:normal;transform:scaleX(0.9200);transform-origin:center 0;">13</div>
<div class="t" style="left:3.21px;top:466.15px;font-size:14px;color:#222;font-weight:normal;transform:scaleX(0.9200);transform-origin:center 0;">14</div>
<div class="t" style="left:3.21px;top:487.15px;font-size:14px;color:#222;font-weight:normal;transform:scaleX(0.9200);transform-origin:center 0;">15</div>
<div class="t" style="left:3.21px;top:508.15px;font-size:14px;color:#222;font-weight:normal;transform:scaleX(0.9200);transform-origin:center 0;">16</div>
<div class="t" style="left:3.21px;top:529.15px;font-size:14px;color:#222;font-weight:normal;transform:scaleX(0.9200);transform-origin:center 0;">17</div>
<div class="t" style="left:3.21px;top:550.15px;font-size:14px;color:#222;font-weight:normal;transform:scaleX(0.9200);transform-origin:center 0;">18</div>
<div class="t" style="left:3.21px;top:571.15px;font-size:14px;color:#222;font-weight:normal;transform:scaleX(0.9200);transform-origin:center 0;">19</div>
<div class="t" style="left:3.21px;top:592.15px;font-size:14px;color:#222;font-weight:normal;transform:scaleX(0.9200);transform-origin:center 0;">20</div>
<div class="t" style="left:3.21px;top:613.15px;font-size:14px;color:#222;font-weight:normal;transform:scaleX(0.9200);transform-origin:center 0;">21</div>
<div class="t" style="left:3.21px;top:634.15px;font-size:14px;color:#222;font-weight:normal;transform:scaleX(0.9200);transform-origin:center 0;">22</div>
<div class="t" style="left:3.21px;top:655.15px;font-size:14px;color:#222;font-weight:normal;transform:scaleX(0.9200);transform-origin:center 0;">23</div>
<div class="t" style="left:3.21px;top:676.15px;font-size:14px;color:#222;font-weight:normal;transform:scaleX(0.9200);transform-origin:center 0;">24</div>
<div class="t" style="left:3.21px;top:697.15px;font-size:14px;color:#222;font-weight:normal;transform:scaleX(0.9200);transform-origin:center 0;">25</div>
<div class="t" style="left:3.21px;top:718.15px;font-size:14px;color:#222;font-weight:normal;transform:scaleX(0.9200);transform-origin:center 0;">26</div>
<div class="t" style="left:110.50px;top:192.15px;font-size:14px;color:#000;font-weight:normal;transform:scaleX(0.9150);transform-origin:left 0;">Количество:</div>
<div class="t" style="left:224.50px;top:192.15px;font-size:14px;color:#000;font-weight:normal;transform:scaleX(0.9150);transform-origin:left 0;">менее</div>
<div class="t" style="left:349.50px;top:192.15px;font-size:14px;color:#9c5700;font-weight:normal;transform:scaleX(0.9150);transform-origin:left 0;">100</div>
<div class="t" style="left:224.50px;top:213.15px;font-size:14px;color:#000;font-weight:normal;transform:scaleX(0.9150);transform-origin:left 0;">более</div>
<div class="t" style="left:349.50px;top:213.15px;font-size:14px;color:#006100;font-weight:normal;transform:scaleX(0.9150);transform-origin:left 0;">100</div>
<div class="t" style="left:24.00px;top:256.15px;font-size:14px;color:#000;font-weight:bold;transform:scaleX(0.9450);transform-origin:left 0;">Дата</div>
<div class="t" style="left:110.00px;top:256.15px;font-size:14px;color:#000;font-weight:bold;transform:scaleX(0.9450);transform-origin:left 0;">Код Покупателя</div>
<div class="t" style="left:224.00px;top:256.15px;font-size:14px;color:#000;font-weight:bold;transform:scaleX(0.9450);transform-origin:left 0;">Город</div>
<div class="t" style="left:349.00px;top:256.15px;font-size:14px;color:#000;font-weight:bold;transform:scaleX(0.9450);transform-origin:left 0;">Товар</div>
<div class="t" style="left:520.00px;top:256.15px;font-size:14px;color:#000;font-weight:bold;transform:scaleX(0.9450);transform-origin:left 0;">Количество</div>
<div class="t" style="left:611.00px;top:256.15px;font-size:14px;color:#000;font-weight:bold;transform:scaleX(0.9450);transform-origin:left 0;">Сумма</div>
<div class="t" style="left:680.00px;top:256.15px;font-size:14px;color:#000;font-weight:bold;transform:scaleX(0.9450);transform-origin:left 0;">Выполнен</div>
<div class="t" style="left:35.72px;top:277.15px;font-size:14px;color:#000;font-weight:normal;transform:scaleX(0.9150);transform-origin:right 0;">20.01.2020</div>
<div class="t" style="left:110.50px;top:277.15px;font-size:14px;color:#000;font-weight:normal;transform:scaleX(0.9150);transform-origin:left 0;">Оранжевый</div>
<div class="t" style="left:224.50px;top:277.15px;font-size:14px;color:#000;font-weight:normal;transform:scaleX(0.9150);transform-origin:left 0;">Большой город</div>
<div class="t" style="left:349.50px;top:277.15px;font-size:14px;color:#000;font-weight:normal;transform:scaleX(0.9150);transform-origin:left 0;">Молочный шоколад</div>
<div class="t" style="left:583.44px;top:277.15px;font-size:14px;color:#000;font-weight:normal;transform:scaleX(0.9150);transform-origin:right 0;">125</div>
<div class="t" style="left:637.89px;top:277.15px;font-size:14px;color:#000;font-weight:normal;transform:scaleX(0.9150);transform-origin:right 0;">11250</div>
<div class="t" style="left:711.86px;top:277.15px;font-size:14px;color:#000;font-weight:normal;transform:scaleX(0.9150);transform-origin:center 0;">Да</div>
<div class="t" style="left:35.72px;top:298.15px;font-size:14px;color:#000;font-weight:normal;transform:scaleX(0.9150);transform-origin:right 0;">21.01.2020</div>
<div class="t" style="left:110.50px;top:298.15px;font-size:14px;color:#000;font-weight:normal;transform:scaleX(0.9150);transform-origin:left 0;">Красный</div>
<div class="t" style="left:224.50px;top:298.15px;font-size:14px;color:#000;font-weight:normal;transform:scaleX(0.9150);transform-origin:left 0;">Большой город</div>
<div class="t" style="left:349.50px;top:298.15px;font-size:14px;color:#000;font-weight:normal;transform:scaleX(0.9150);transform-origin:left 0;">Черный шоколад</div>
<div class="t" style="left:584.47px;top:298.15px;font-size:14px;color:#000;font-weight:normal;transform:scaleX(0.9150);transform-origin:right 0;">211</div>
<div class="t" style="left:636.86px;top:298.15px;font-size:14px;color:#000;font-weight:normal;transform:scaleX(0.9150);transform-origin:right 0;">23210</div>
<div class="t" style="left:708.58px;top:298.15px;font-size:14px;color:#000;font-weight:normal;transform:scaleX(0.9150);transform-origin:center 0;">Нет</div>
<div class="t" style="left:35.72px;top:319.15px;font-size:14px;color:#000;font-weight:normal;transform:scaleX(0.9150);transform-origin:right 0;">22.01.2020</div>
<div class="t" style="left:110.50px;top:319.15px;font-size:14px;color:#000;font-weight:normal;transform:scaleX(0.9150);transform-origin:left 0;">Розовый</div>
<div class="t" style="left:224.50px;top:319.15px;font-size:14px;color:#000;font-weight:normal;transform:scaleX(0.9150);transform-origin:left 0;">Средний город</div>
<div class="t" style="left:349.50px;top:319.15px;font-size:14px;color:#000;font-weight:normal;transform:scaleX(0.9150);transform-origin:left 0;">Молочный шоколад</div>
<div class="t" style="left:591.22px;top:319.15px;font-size:14px;color:#000;font-weight:normal;transform:scaleX(0.9150);transform-origin:right 0;">89</div>
<div class="t" style="left:644.64px;top:319.15px;font-size:14px;color:#000;font-weight:normal;transform:scaleX(0.9150);transform-origin:right 0;">8010</div>
<div class="t" style="left:711.86px;top:319.15px;font-size:14px;color:#000;font-weight:normal;transform:scaleX(0.9150);transform-origin:center 0;">Да</div>
<div class="t" style="left:35.72px;top:340.15px;font-size:14px;color:#000;font-weight:normal;transform:scaleX(0.9150);transform-origin:right 0;">23.01.2020</div>
<div class="t" style="left:110.50px;top:340.15px;font-size:14px;color:#000;font-weight:normal;transform:scaleX(0.9150);transform-origin:left 0;">Серый</div>
<div class="t" style="left:224.50px;top:340.15px;font-size:14px;color:#000;font-weight:normal;transform:scaleX(0.9150);transform-origin:left 0;">Большой город</div>
<div class="t" style="left:349.50px;top:340.15px;font-size:14px;color:#000;font-weight:normal;transform:scaleX(0.9150);transform-origin:left 0;">Шоколад с орехами</div>
<div class="t" style="left:591.22px;top:340.15px;font-size:14px;color:#000;font-weight:normal;transform:scaleX(0.9150);transform-origin:right 0;">81</div>
<div class="t" style="left:636.86px;top:340.15px;font-size:14px;color:#000;font-weight:normal;transform:scaleX(0.9150);transform-origin:right 0;">12150</div>
<div class="t" style="left:711.86px;top:340.15px;font-size:14px;color:#000;font-weight:normal;transform:scaleX(0.9150);transform-origin:center 0;">Да</div>
<div class="t" style="left:35.72px;top:361.15px;font-size:14px;color:#000;font-weight:normal;transform:scaleX(0.9150);transform-origin:right 0;">24.01.2020</div>
<div class="t" style="left:110.50px;top:361.15px;font-size:14px;color:#000;font-weight:normal;transform:scaleX(0.9150);transform-origin:left 0;">Голубой</div>
<div class="t" style="left:224.50px;top:361.15px;font-size:14px;color:#000;font-weight:normal;transform:scaleX(0.9150);transform-origin:left 0;">Маленький город</div>
<div class="t" style="left:349.50px;top:361.15px;font-size:14px;color:#000;font-weight:normal;transform:scaleX(0.9150);transform-origin:left 0;">Черный шоколад</div>
<div class="t" style="left:591.22px;top:361.15px;font-size:14px;color:#000;font-weight:normal;transform:scaleX(0.9150);transform-origin:right 0;">48</div>
<div class="t" style="left:644.64px;top:361.15px;font-size:14px;color:#000;font-weight:normal;transform:scaleX(0.9150);transform-origin:right 0;">5280</div>
<div class="t" style="left:711.86px;top:361.15px;font-size:14px;color:#000;font-weight:normal;transform:scaleX(0.9150);transform-origin:center 0;">Да</div>
<div class="t" style="left:35.72px;top:382.15px;font-size:14px;color:#000;font-weight:normal;transform:scaleX(0.9150);transform-origin:right 0;">25.01.2020</div>
<div class="t" style="left:110.50px;top:382.15px;font-size:14px;color:#000;font-weight:normal;transform:scaleX(0.9150);transform-origin:left 0;">Черный</div>
<div class="t" style="left:224.50px;top:382.15px;font-size:14px;color:#000;font-weight:normal;transform:scaleX(0.9150);transform-origin:left 0;">Большой город</div>
<div class="t" style="left:349.50px;top:382.15px;font-size:14px;color:#000;font-weight:normal;transform:scaleX(0.9150);transform-origin:left 0;">Шоколад с орехами</div>
<div class="t" style="left:591.22px;top:382.15px;font-size:14px;color:#000;font-weight:normal;transform:scaleX(0.9150);transform-origin:right 0;">35</div>
<div class="t" style="left:644.64px;top:382.15px;font-size:14px;color:#000;font-weight:normal;transform:scaleX(0.9150);transform-origin:right 0;">5250</div>
<div class="t" style="left:708.58px;top:382.15px;font-size:14px;color:#000;font-weight:normal;transform:scaleX(0.9150);transform-origin:center 0;">Нет</div>
<div class="t" style="left:35.72px;top:403.15px;font-size:14px;color:#000;font-weight:normal;transform:scaleX(0.9150);transform-origin:right 0;">26.01.2020</div>
<div class="t" style="left:110.50px;top:403.15px;font-size:14px;color:#000;font-weight:normal;transform:scaleX(0.9150);transform-origin:left 0;">Белый</div>
<div class="t" style="left:224.50px;top:403.15px;font-size:14px;color:#000;font-weight:normal;transform:scaleX(0.9150);transform-origin:left 0;">Большой город</div>
<div class="t" style="left:349.50px;top:403.15px;font-size:14px;color:#000;font-weight:normal;transform:scaleX(0.9150);transform-origin:left 0;">Молочный шоколад</div>
<div class="t" style="left:591.22px;top:403.15px;font-size:14px;color:#000;font-weight:normal;transform:scaleX(0.9150);transform-origin:right 0;">41</div>
<div class="t" style="left:644.64px;top:403.15px;font-size:14px;color:#000;font-weight:normal;transform:scaleX(0.9150);transform-origin:right 0;">3690</div>
<div class="t" style="left:708.58px;top:403.15px;font-size:14px;color:#000;font-weight:normal;transform:scaleX(0.9150);transform-origin:center 0;">Нет</div>
<div class="t" style="left:35.72px;top:424.15px;font-size:14px;color:#000;font-weight:normal;transform:scaleX(0.9150);transform-origin:right 0;">27.01.2020</div>
<div class="t" style="left:110.50px;top:424.15px;font-size:14px;color:#000;font-weight:normal;transform:scaleX(0.9150);transform-origin:left 0;">Зелёный</div>
<div class="t" style="left:224.50px;top:424.15px;font-size:14px;color:#000;font-weight:normal;transform:scaleX(0.9150);transform-origin:left 0;">Деревня</div>
<div class="t" style="left:349.50px;top:424.15px;font-size:14px;color:#000;font-weight:normal;transform:scaleX(0.9150);transform-origin:left 0;">Шоколад с орехами</div>
<div class="t" style="left:583.44px;top:424.15px;font-size:14px;color:#000;font-weight:normal;transform:scaleX(0.9150);transform-origin:right 0;">122</div>
<div class="t" style="left:636.86px;top:424.15px;font-size:14px;color:#000;font-weight:normal;transform:scaleX(0.9150);transform-origin:right 0;">18300</div>
<div class="t" style="left:711.86px;top:424.15px;font-size:14px;color:#000;font-weight:normal;transform:scaleX(0.9150);transform-origin:center 0;">Да</div>
<div class="t" style="left:35.72px;top:445.15px;font-size:14px;color:#000;font-weight:normal;transform:scaleX(0.9150);transform-origin:right 0;">28.01.2020</div>
<div class="t" style="left:110.50px;top:445.15px;font-size:14px;color:#000;font-weight:normal;transform:scaleX(0.9150);transform-origin:left 0;">Желтый</div>
<div class="t" style="left:224.50px;top:445.15px;font-size:14px;color:#000;font-weight:normal;transform:scaleX(0.9150);transform-origin:left 0;">Средний город</div>
<div class="t" style="left:349.50px;top:445.15px;font-size:14px;color:#000;font-weight:normal;transform:scaleX(0.9150);transform-origin:left 0;">Черный шоколад</div>
<div class="t" style="left:591.22px;top:445.15px;font-size:14px;color:#000;font-weight:normal;transform:scaleX(0.9150);transform-origin:right 0;">52</div>
<div class="t" style="left:644.64px;top:445.15px;font-size:14px;color:#000;font-weight:normal;transform:scaleX(0.9150);transform-origin:right 0;">5720</div>
<div class="t" style="left:711.86px;top:445.15px;font-size:14px;color:#000;font-weight:normal;transform:scaleX(0.9150);transform-origin:center 0;">Да</div>
<div class="t" style="left:35.72px;top:466.15px;font-size:14px;color:#000;font-weight:normal;transform:scaleX(0.9150);transform-origin:right 0;">29.01.2020</div>
<div class="t" style="left:110.50px;top:466.15px;font-size:14px;color:#000;font-weight:normal;transform:scaleX(0.9150);transform-origin:left 0;">Серебряный</div>
<div class="t" style="left:224.50px;top:466.15px;font-size:14px;color:#000;font-weight:normal;transform:scaleX(0.9150);transform-origin:left 0;">Средний город</div>
<div class="t" style="left:349.50px;top:466.15px;font-size:14px;color:#000;font-weight:normal;transform:scaleX(0.9150);transform-origin:left 0;">Супер Черный шоколад</div>
<div class="t" style="left:591.22px;top:466.15px;font-size:14px;color:#000;font-weight:normal;transform:scaleX(0.9150);transform-origin:right 0;">71</div>
<div class="t" style="left:636.86px;top:466.15px;font-size:14px;color:#000;font-weight:normal;transform:scaleX(0.9150);transform-origin:right 0;">10650</div>
<div class="t" style="left:708.58px;top:466.15px;font-size:14px;color:#000;font-weight:normal;transform:scaleX(0.9150);transform-origin:center 0;">Нет</div>
<div class="t" style="left:35.72px;top:487.15px;font-size:14px;color:#000;font-weight:normal;transform:scaleX(0.9150);transform-origin:right 0;">30.01.2020</div>
<div class="t" style="left:110.50px;top:487.15px;font-size:14px;color:#000;font-weight:normal;transform:scaleX(0.9150);transform-origin:left 0;">Золотой</div>
<div class="t" style="left:224.50px;top:487.15px;font-size:14px;color:#000;font-weight:normal;transform:scaleX(0.9150);transform-origin:left 0;">Средний город</div>
<div class="t" style="left:349.50px;top:487.15px;font-size:14px;color:#000;font-weight:normal;transform:scaleX(0.9150);transform-origin:left 0;">Шоколад с орехами</div>
<div class="t" style="left:591.22px;top:487.15px;font-size:14px;color:#000;font-weight:normal;transform:scaleX(0.9150);transform-origin:right 0;">86</div>
<div class="t" style="left:636.86px;top:487.15px;font-size:14px;color:#000;font-weight:normal;transform:scaleX(0.9150);transform-origin:right 0;">12900</div>
<div class="t" style="left:708.58px;top:487.15px;font-size:14px;color:#000;font-weight:normal;transform:scaleX(0.9150);transform-origin:center 0;">Нет</div>
<div class="t" style="left:35.72px;top:508.15px;font-size:14px;color:#000;font-weight:normal;transform:scaleX(0.9150);transform-origin:right 0;">31.01.2020</div>
<div class="t" style="left:110.50px;top:508.15px;font-size:14px;color:#000;font-weight:normal;transform:scaleX(0.9150);transform-origin:left 0;">Оранжевый</div>
<div class="t" style="left:224.50px;top:508.15px;font-size:14px;color:#000;font-weight:normal;transform:scaleX(0.9150);transform-origin:left 0;">Средний город</div>
<div class="t" style="left:349.50px;top:508.15px;font-size:14px;color:#000;font-weight:normal;transform:scaleX(0.9150);transform-origin:left 0;">Молочный шоколад</div>
<div class="t" style="left:591.22px;top:508.15px;font-size:14px;color:#000;font-weight:normal;transform:scaleX(0.9150);transform-origin:right 0;">24</div>
<div class="t" style="left:644.64px;top:508.15px;font-size:14px;color:#000;font-weight:normal;transform:scaleX(0.9150);transform-origin:right 0;">2160</div>
<div class="t" style="left:711.86px;top:508.15px;font-size:14px;color:#000;font-weight:normal;transform:scaleX(0.9150);transform-origin:center 0;">Да</div>
<div class="t" style="left:35.72px;top:529.15px;font-size:14px;color:#000;font-weight:normal;transform:scaleX(0.9150);transform-origin:right 0;">01.02.2020</div>
<div class="t" style="left:110.50px;top:529.15px;font-size:14px;color:#000;font-weight:normal;transform:scaleX(0.9150);transform-origin:left 0;">Красный</div>
<div class="t" style="left:224.50px;top:529.15px;font-size:14px;color:#000;font-weight:normal;transform:scaleX(0.9150);transform-origin:left 0;">Средний город</div>
<div class="t" style="left:349.50px;top:529.15px;font-size:14px;color:#000;font-weight:normal;transform:scaleX(0.9150);transform-origin:left 0;">Супер Черный шоколад</div>
<div class="t" style="left:591.22px;top:529.15px;font-size:14px;color:#000;font-weight:normal;transform:scaleX(0.9150);transform-origin:right 0;">48</div>
<div class="t" style="left:644.64px;top:529.15px;font-size:14px;color:#000;font-weight:normal;transform:scaleX(0.9150);transform-origin:right 0;">7200</div>
<div class="t" style="left:711.86px;top:529.15px;font-size:14px;color:#000;font-weight:normal;transform:scaleX(0.9150);transform-origin:center 0;">Да</div>
<div class="t" style="left:35.72px;top:550.15px;font-size:14px;color:#000;font-weight:normal;transform:scaleX(0.9150);transform-origin:right 0;">02.02.2020</div>
<div class="t" style="left:110.50px;top:550.15px;font-size:14px;color:#000;font-weight:normal;transform:scaleX(0.9150);transform-origin:left 0;">Розовый</div>
<div class="t" style="left:224.50px;top:550.15px;font-size:14px;color:#000;font-weight:normal;transform:scaleX(0.9150);transform-origin:left 0;">Маленький город</div>
<div class="t" style="left:349.50px;top:550.15px;font-size:14px;color:#000;font-weight:normal;transform:scaleX(0.9150);transform-origin:left 0;">Молочный шоколад</div>
<div class="t" style="left:591.22px;top:550.15px;font-size:14px;color:#000;font-weight:normal;transform:scaleX(0.9150);transform-origin:right 0;">21</div>
<div class="t" style="left:644.64px;top:550.15px;font-size:14px;color:#000;font-weight:normal;transform:scaleX(0.9150);transform-origin:right 0;">1890</div>
<div class="t" style="left:711.86px;top:550.15px;font-size:14px;color:#000;font-weight:normal;transform:scaleX(0.9150);transform-origin:center 0;">Да</div>
<div class="t" style="left:35.72px;top:571.15px;font-size:14px;color:#000;font-weight:normal;transform:scaleX(0.9150);transform-origin:right 0;">03.02.2020</div>
<div class="t" style="left:110.50px;top:571.15px;font-size:14px;color:#000;font-weight:normal;transform:scaleX(0.9150);transform-origin:left 0;">Серый</div>
<div class="t" style="left:224.50px;top:571.15px;font-size:14px;color:#000;font-weight:normal;transform:scaleX(0.9150);transform-origin:left 0;">Маленький город</div>
<div class="t" style="left:349.50px;top:571.15px;font-size:14px;color:#000;font-weight:normal;transform:scaleX(0.9150);transform-origin:left 0;">Черный шоколад</div>
<div class="t" style="left:583.44px;top:571.15px;font-size:14px;color:#000;font-weight:normal;transform:scaleX(0.9150);transform-origin:right 0;">155</div>
<div class="t" style="left:636.86px;top:571.15px;font-size:14px;color:#000;font-weight:normal;transform:scaleX(0.9150);transform-origin:right 0;">17050</div>
<div class="t" style="left:711.86px;top:571.15px;font-size:14px;color:#000;font-weight:normal;transform:scaleX(0.9150);transform-origin:center 0;">Да</div>
<div class="t" style="left:35.72px;top:592.15px;font-size:14px;color:#000;font-weight:normal;transform:scaleX(0.9150);transform-origin:right 0;">04.02.2020</div>
<div class="t" style="left:110.50px;top:592.15px;font-size:14px;color:#000;font-weight:normal;transform:scaleX(0.9150);transform-origin:left 0;">Голубой</div>
<div class="t" style="left:224.50px;top:592.15px;font-size:14px;color:#000;font-weight:normal;transform:scaleX(0.9150);transform-origin:left 0;">Средний город</div>
<div class="t" style="left:349.50px;top:592.15px;font-size:14px;color:#000;font-weight:normal;transform:scaleX(0.9150);transform-origin:left 0;">Шоколад с орехами</div>
<div class="t" style="left:591.22px;top:592.15px;font-size:14px;color:#000;font-weight:normal;transform:scaleX(0.9150);transform-origin:right 0;">23</div>
<div class="t" style="left:644.64px;top:592.15px;font-size:14px;color:#000;font-weight:normal;transform:scaleX(0.9150);transform-origin:right 0;">3450</div>
<div class="t" style="left:708.58px;top:592.15px;font-size:14px;color:#000;font-weight:normal;transform:scaleX(0.9150);transform-origin:center 0;">Нет</div>
<div class="t" style="left:35.72px;top:613.15px;font-size:14px;color:#000;font-weight:normal;transform:scaleX(0.9150);transform-origin:right 0;">05.02.2020</div>
<div class="t" style="left:110.50px;top:613.15px;font-size:14px;color:#000;font-weight:normal;transform:scaleX(0.9150);transform-origin:left 0;">Черный</div>
<div class="t" style="left:224.50px;top:613.15px;font-size:14px;color:#000;font-weight:normal;transform:scaleX(0.9150);transform-origin:left 0;">Маленький город</div>
<div class="t" style="left:349.50px;top:613.15px;font-size:14px;color:#000;font-weight:normal;transform:scaleX(0.9150);transform-origin:left 0;">Черный шоколад</div>
<div class="t" style="left:583.44px;top:613.15px;font-size:14px;color:#000;font-weight:normal;transform:scaleX(0.9150);transform-origin:right 0;">144</div>
<div class="t" style="left:636.86px;top:613.15px;font-size:14px;color:#000;font-weight:normal;transform:scaleX(0.9150);transform-origin:right 0;">15840</div>
<div class="t" style="left:708.58px;top:613.15px;font-size:14px;color:#000;font-weight:normal;transform:scaleX(0.9150);transform-origin:center 0;">Нет</div>
<div class="t" style="left:35.72px;top:634.15px;font-size:14px;color:#000;font-weight:normal;transform:scaleX(0.9150);transform-origin:right 0;">06.02.2020</div>
<div class="t" style="left:110.50px;top:634.15px;font-size:14px;color:#000;font-weight:normal;transform:scaleX(0.9150);transform-origin:left 0;">Белый</div>
<div class="t" style="left:224.50px;top:634.15px;font-size:14px;color:#000;font-weight:normal;transform:scaleX(0.9150);transform-origin:left 0;">Деревня</div>
<div class="t" style="left:349.50px;top:634.15px;font-size:14px;color:#000;font-weight:normal;transform:scaleX(0.9150);transform-origin:left 0;">Молочный шоколад</div>
<div class="t" style="left:591.22px;top:634.15px;font-size:14px;color:#000;font-weight:normal;transform:scaleX(0.9150);transform-origin:right 0;">25</div>
<div class="t" style="left:644.64px;top:634.15px;font-size:14px;color:#000;font-weight:normal;transform:scaleX(0.9150);transform-origin:right 0;">2250</div>
<div class="t" style="left:711.86px;top:634.15px;font-size:14px;color:#000;font-weight:normal;transform:scaleX(0.9150);transform-origin:center 0;">Да</div>
<div class="t" style="left:35.72px;top:655.15px;font-size:14px;color:#000;font-weight:normal;transform:scaleX(0.9150);transform-origin:right 0;">07.02.2020</div>
<div class="t" style="left:110.50px;top:655.15px;font-size:14px;color:#000;font-weight:normal;transform:scaleX(0.9150);transform-origin:left 0;">Зелёный</div>
<div class="t" style="left:224.50px;top:655.15px;font-size:14px;color:#000;font-weight:normal;transform:scaleX(0.9150);transform-origin:left 0;">Деревня</div>
<div class="t" style="left:349.50px;top:655.15px;font-size:14px;color:#000;font-weight:normal;transform:scaleX(0.9150);transform-origin:left 0;">Шоколад с орехами</div>
<div class="t" style="left:591.22px;top:655.15px;font-size:14px;color:#000;font-weight:normal;transform:scaleX(0.9150);transform-origin:right 0;">48</div>
<div class="t" style="left:644.64px;top:655.15px;font-size:14px;color:#000;font-weight:normal;transform:scaleX(0.9150);transform-origin:right 0;">7200</div>
<div class="t" style="left:711.86px;top:655.15px;font-size:14px;color:#000;font-weight:normal;transform:scaleX(0.9150);transform-origin:center 0;">Да</div>
<div class="t" style="left:35.72px;top:676.15px;font-size:14px;color:#000;font-weight:normal;transform:scaleX(0.9150);transform-origin:right 0;">08.02.2020</div>
<div class="t" style="left:110.50px;top:676.15px;font-size:14px;color:#000;font-weight:normal;transform:scaleX(0.9150);transform-origin:left 0;">Желтый</div>
<div class="t" style="left:224.50px;top:676.15px;font-size:14px;color:#000;font-weight:normal;transform:scaleX(0.9150);transform-origin:left 0;">Деревня</div>
<div class="t" style="left:349.50px;top:676.15px;font-size:14px;color:#000;font-weight:normal;transform:scaleX(0.9150);transform-origin:left 0;">Черный шоколад</div>
<div class="t" style="left:591.22px;top:676.15px;font-size:14px;color:#000;font-weight:normal;transform:scaleX(0.9150);transform-origin:right 0;">75</div>
<div class="t" style="left:644.64px;top:676.15px;font-size:14px;color:#000;font-weight:normal;transform:scaleX(0.9150);transform-origin:right 0;">8250</div>
<div class="t" style="left:711.86px;top:676.15px;font-size:14px;color:#000;font-weight:normal;transform:scaleX(0.9150);transform-origin:center 0;">Да</div>
<div class="t" style="left:1.99px;top:111.49px;font-size:11px;color:#262626;font-weight:normal;transform:scaleX(1.0237);transform-origin:left 0;">Буфер обмена</div>
<div class="t" style="left:179.45px;top:111.49px;font-size:11px;color:#262626;font-weight:normal;transform:scaleX(1.1079);transform-origin:left 0;">Шрифт</div>
<div class="t" style="left:353.08px;top:111.49px;font-size:11px;color:#262626;font-weight:normal;transform:scaleX(1.0412);transform-origin:left 0;">Выравнивание</div>
<div class="t" style="left:537.51px;top:111.49px;font-size:11px;color:#262626;font-weight:normal;transform:scaleX(0.9791);transform-origin:left 0;">Число</div>
<div class="t" style="left:749.50px;top:111.49px;font-size:11px;color:#262626;font-weight:normal;transform:scaleX(0.9934);transform-origin:left 0;">Стили</div>
<div class="t" style="left:927.44px;top:111.49px;font-size:11px;color:#262626;font-weight:normal;transform:scaleX(1.1140);transform-origin:left 0;">Ячейки</div>
<div class="t" style="left:1050.97px;top:111.49px;font-size:11px;color:#262626;font-weight:normal;transform:scaleX(1.0520);transform-origin:left 0;">Редактирование</div>
<div class="t" style="left:7.23px;top:74.84px;font-size:12px;color:#a6a6a6;font-weight:normal;transform:scaleX(0.9363);transform-origin:left 0;">Вставить</div>
<div class="t" style="left:112.10px;top:48.84px;font-size:12px;color:#262626;font-weight:normal;transform:scaleX(0.9950);transform-origin:left 0;">Arial</div>
<div class="t" style="left:214.50px;top:48.84px;font-size:12px;color:#262626;font-weight:normal;transform:scaleX(1.0033);transform-origin:left 0;">10</div>
<div class="t" style="left:113.44px;top:78.00px;font-size:13px;color:#444;font-weight:bold;transform:scaleX(1.1163);transform-origin:left 0;">Ж</div>
<div class="t" style="left:136.42px;top:78.00px;font-size:13px;color:#444;font-weight:bold;transform:scaleX(1.1532);transform-origin:left 0;font-style:italic">К</div>
<div class="t" style="left:158.98px;top:78.00px;font-size:13px;color:#444;font-weight:bold;transform:scaleX(1.0441);transform-origin:left 0;text-decoration:underline">Ч</div>
<div class="t" style="left:498.88px;top:48.84px;font-size:12px;color:#262626;font-weight:normal;transform:scaleX(1.0494);transform-origin:left 0;">Общий</div>
<div class="t" style="left:670.09px;top:75.34px;font-size:12px;color:#262626;font-weight:normal;transform:scaleX(1.0272);transform-origin:left 0;">Условное</div>
<div class="t" style="left:645.50px;top:91.34px;font-size:12px;color:#262626;font-weight:normal;transform:scaleX(0.9962);transform-origin:left 0;">форматирование</div>
<div class="t" style="left:754.50px;top:75.34px;font-size:12px;color:#262626;font-weight:normal;">Форматировать</div>
<div class="t" style="left:761.51px;top:91.34px;font-size:12px;color:#262626;font-weight:normal;transform:scaleX(0.9889);transform-origin:left 0;">как таблицу</div>
<div class="t" style="left:849.52px;top:75.34px;font-size:12px;color:#262626;font-weight:normal;transform:scaleX(0.9530);transform-origin:left 0;">Стили</div>
<div class="t" style="left:845.52px;top:91.34px;font-size:12px;color:#262626;font-weight:normal;transform:scaleX(0.9552);transform-origin:left 0;">ячеек</div>
<div class="t" style="left:926.23px;top:41.14px;font-size:12px;color:#262626;font-weight:normal;transform:scaleX(0.9404);transform-origin:left 0;">Вставить</div>
<div class="t" style="left:925.51px;top:64.14px;font-size:12px;color:#262626;font-weight:normal;transform:scaleX(0.9815);transform-origin:left 0;">Удалить</div>
<div class="t" style="left:926.19px;top:87.14px;font-size:12px;color:#262626;font-weight:normal;transform:scaleX(1.0158);transform-origin:left 0;">Формат</div>
<div class="t" style="left:1046.49px;top:74.84px;font-size:12px;color:#262626;font-weight:normal;transform:scaleX(1.0176);transform-origin:left 0;">Сортировка</div>
<div class="t" style="left:1051.01px;top:90.84px;font-size:12px;color:#262626;font-weight:normal;transform:scaleX(0.9878);transform-origin:left 0;">и фильтр</div>
<div class="t" style="left:1125.49px;top:74.84px;font-size:12px;color:#262626;font-weight:normal;transform:scaleX(1.0166);transform-origin:left 0;">Найти и</div>
<div class="t" style="left:1117.52px;top:90.84px;font-size:12px;color:#262626;font-weight:normal;transform:scaleX(0.9671);transform-origin:left 0;">выделить</div>
<div class="t" style="left:9.04px;top:142.42px;font-size:12.5px;color:#262626;font-weight:normal;transform:scaleX(0.9233);transform-origin:left 0;">E5</div>
<div class="t" style="left:313.28px;top:142.42px;font-size:12.5px;color:#262626;font-weight:normal;transform:scaleX(1.0323);transform-origin:left 0;">125</div><svg class="a" style="left:956px;top:505px" width="20" height="28" viewBox="0 0 20 28">
<path d="M1.2,1.4 L1.2,20 L5.3,16.1 L9,24.8 Q10.5,26.3 13,24.7 L9.6,16.6 L16,15.2 Z" fill="#fff" stroke="#000" stroke-width="1.2" stroke-linejoin="round"/>
</svg>

</body></html>
